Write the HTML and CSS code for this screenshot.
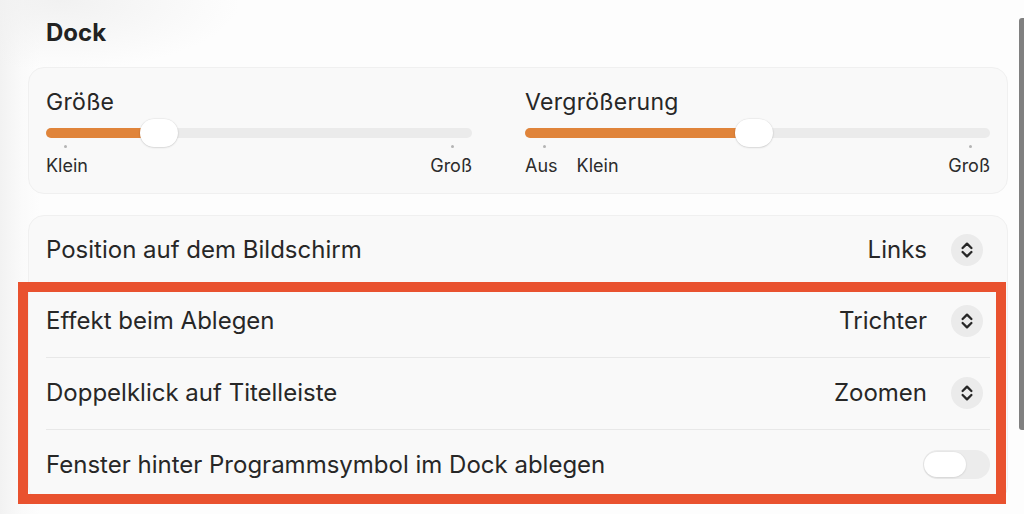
FILE: index.html
```html
<!DOCTYPE html>
<html>

	<head>
		<meta charset="utf-8" />
		<meta name="viewport" content="width=device-width">
		<title>Dock</title>
		<link rel="stylesheet" href="styles.css">
	</head>

	<body>
		<div class="pane">
			<h2 class="pane-tit">Dock</h2>

			<div class="card card-sliders">
				<div class="slider-group">
					<div class="slider-label">Größe</div>
					<div class="slider">
						<div class="slider-track">
							<div class="slider-fill" style="width: 113px;"></div>
						</div>
						<div class="slider-thumb" style="left: 94px;"></div>
					</div>
					<div class="slider-ticks">
						<span class="tick"></span>
						<span class="tick"></span>
					</div>
					<div class="slider-marks">
						<span>Klein</span>
						<span>Groß</span>
					</div>
				</div>
				<div class="slider-group">
					<div class="slider-label">Vergrößerung</div>
					<div class="slider">
						<div class="slider-track">
							<div class="slider-fill" style="width: 228px;"></div>
						</div>
						<div class="slider-thumb" style="left: 210px;"></div>
					</div>
					<div class="slider-ticks">
						<span class="tick"></span>
						<span class="tick"></span>
					</div>
					<div class="slider-marks">
						<span>Aus<em class="mark-gap">Klein</em></span>
						<span>Groß</span>
					</div>
				</div>
			</div>

			<div class="card card-list">
				<div class="row">
					<span class="row-name">Position auf dem Bildschirm</span>
					<span class="row-value">Links</span>
					<span class="stepper">
						<svg width="14" height="18" viewBox="0 0 14 18"><path d="M2.6 7 L7 2.6 L11.4 7 M2.6 11 L7 15.4 L11.4 11" fill="none" stroke="#262626" stroke-width="2.3" stroke-linecap="round" stroke-linejoin="round"/></svg>
					</span>
				</div>
				<div class="row">
					<span class="row-name">Effekt beim Ablegen</span>
					<span class="row-value">Trichter</span>
					<span class="stepper">
						<svg width="14" height="18" viewBox="0 0 14 18"><path d="M2.6 7 L7 2.6 L11.4 7 M2.6 11 L7 15.4 L11.4 11" fill="none" stroke="#262626" stroke-width="2.3" stroke-linecap="round" stroke-linejoin="round"/></svg>
					</span>
				</div>
				<div class="row">
					<span class="row-name">Doppelklick auf Titelleiste</span>
					<span class="row-value">Zoomen</span>
					<span class="stepper">
						<svg width="14" height="18" viewBox="0 0 14 18"><path d="M2.6 7 L7 2.6 L11.4 7 M2.6 11 L7 15.4 L11.4 11" fill="none" stroke="#262626" stroke-width="2.3" stroke-linecap="round" stroke-linejoin="round"/></svg>
					</span>
				</div>
				<div class="row">
					<span class="row-name">Fenster hinter Programmsymbol im Dock ablegen</span>
					<span class="switch"><span class="switch-knob"></span></span>
				</div>
			</div>

			<!--标注框-->
			<div class="mark-box"></div>
		</div>

		<div class="scrollbar"></div>
	</body>

</html>
```

FILE: styles.css
```css
/*初始化样式*/

* {
	padding: 0;
	margin: 0;
	box-sizing: border-box;
}

body {
	width: 1024px;
	height: 514px;
	overflow: hidden;
	font-family: Inter, "Liberation Sans", Arial, sans-serif;
	color: #272727;
	background:
		radial-gradient(ellipse 180px 70px at 60px 0, #f1f1f1 0, rgba(241, 241, 241, 0) 100%),
		linear-gradient(to right, #f2f2f2 0, #fafafa 22px, #fdfdfd 40px);
}

/*面板*/

.pane {
	position: relative;
	padding: 18px 16px 0 28px;
}

.pane-tit {
	font-size: 24px;
	line-height: 29px;
	font-weight: 700;
	padding-left: 18px;
	color: #222;
}

.card {
	background: #f9f9f9;
	border: 1px solid #f0f0f0;
	border-radius: 16px;
}

/*滑块*/

.card-sliders {
	margin-top: 20px;
	display: grid;
	grid-template-columns: 426px 465px;
	justify-content: space-between;
	padding: 21px 17px 17px;
}

.slider-label {
	font-size: 23px;
	line-height: 27px;
	letter-spacing: 0.3px;
}

.slider {
	position: relative;
	height: 28px;
	margin-top: 3px;
}

.slider-track {
	position: relative;
	top: 9px;
	height: 10px;
	border-radius: 5px;
	background: #ebebeb;
	overflow: hidden;
}

.slider-fill {
	height: 100%;
	background: #e0843a;
}

.slider-thumb {
	position: absolute;
	top: 0;
	width: 38px;
	height: 28px;
	border-radius: 14px;
	background: #fff;
	box-shadow: 0 0.5px 2px rgba(0, 0, 0, .18), 0 0 0 0.5px rgba(0, 0, 0, .04);
}

.slider-ticks {
	display: flex;
	justify-content: space-between;
	padding: 0 18px;
	margin-top: -2px;
	height: 3px;
}

.tick {
	width: 3px;
	height: 3px;
	border-radius: 50%;
	background: #b4b4b4;
}

.slider-marks {
	display: flex;
	justify-content: space-between;
	margin-top: 7px;
	font-size: 18px;
	line-height: 21px;
	color: #2c2c2c;
}

.mark-gap {
	font-style: normal;
	margin-left: 19px;
}

/*列表*/

.card-list {
	margin-top: 21px;
	padding: 0 17px;
}

.row {
	display: flex;
	align-items: center;
	height: 69px;
	padding-bottom: 2px;
	font-size: 24px;
}

.row + .row {
	height: 72px;
	border-top: 1px solid #e8e8e8;
}

.row-name {
	flex: 1;
}

.row-value {
	margin-right: 24px;
}

.stepper {
	display: flex;
	align-items: center;
	justify-content: center;
	width: 32px;
	height: 32px;
	margin-right: 7px;
	border-radius: 50%;
	background: #ebebeb;
}

.switch {
	position: relative;
	width: 67px;
	height: 29px;
	border-radius: 15px;
	background: #ececec;
}

.switch-knob {
	position: absolute;
	top: 2px;
	left: 1px;
	width: 42px;
	height: 25px;
	border-radius: 13px;
	background: #fff;
	box-shadow: 0 0.5px 2px rgba(0, 0, 0, .15);
}

/*标注*/

.mark-box {
	position: absolute;
	left: 18px;
	top: 282px;
	width: 988px;
	height: 222px;
	border: 10px solid #e9522f;
}

.scrollbar {
	position: fixed;
	top: 18px;
	right: 0;
	width: 5px;
	height: 412px;
	border-radius: 3px 0 0 3px;
	background: #808080;
}
```
